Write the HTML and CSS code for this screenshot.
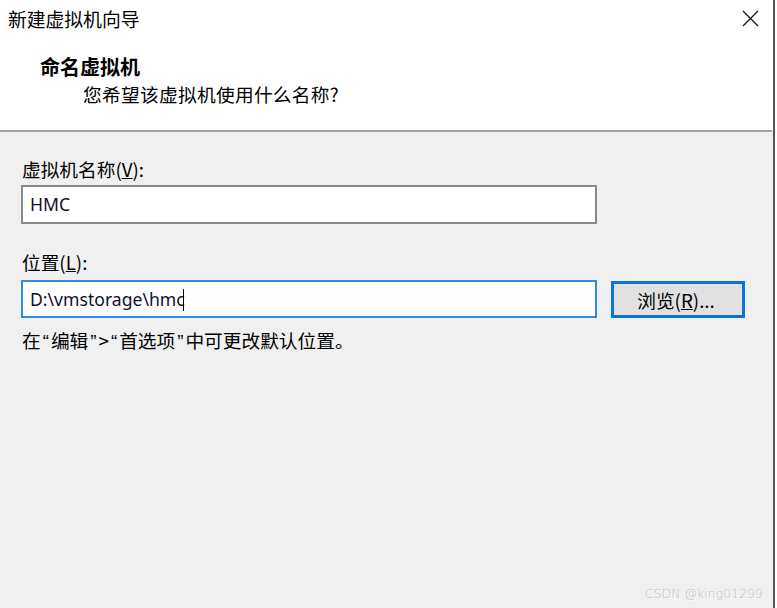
FILE: index.html
```html
<!DOCTYPE html>
<html lang="zh-CN">
<head>
<meta charset="utf-8">
<title>新建虚拟机向导</title>
<link rel="stylesheet" href="styles.css">
</head>
<body>
<div class="window">
  <div class="header">
    <div class="titlebar">
      <span class="title">新建虚拟机向导</span>
      <svg class="close" width="17" height="17" viewBox="0 0 17 17"><path d="M1 1 L16 16 M16 1 L1 16" stroke="#1a1a1a" stroke-width="1.4" fill="none"/></svg>
    </div>
    <div class="heading">命名虚拟机</div>
    <div class="subtitle">您希望该虚拟机使用什么名称?</div>
  </div>
  <div class="sep"></div>
  <div class="content">
    <div class="label label-first">虚拟机名称(<u>V</u>):</div>
    <div class="field">HMC</div>
    <div class="label label-second">位置(<u>L</u>):</div>
    <div class="row">
      <div class="field field-focus">D:\vmstorage\hmc<span class="caret"></span></div>
      <div class="btn">浏览(<u>R</u>)...</div>
    </div>
    <div class="note">在<span class="q">“</span>编辑<span class="q">”</span>&gt;<span class="q">“</span>首选项<span class="q">”</span>中可更改默认位置。</div>
  </div>
  <div class="watermark">CSDN @king01299</div>
</div>
</body>
</html>
```
FILE: styles.css
```css
html, body {
  margin: 0;
  padding: 0;
  background: #ffffff;
}
body {
  font-family: "Noto Sans CJK SC", "Noto Sans", sans-serif;
  color: #000;
  font-size: 18.7px;
}
.window {
  position: relative;
  width: 775px;
  height: 608px;
  box-sizing: border-box;
  border-right: 2px solid #555555;
  display: flex;
  flex-direction: column;
  overflow: hidden;
}
.header {
  height: 130px;
  background: #ffffff;
  flex: none;
}
.titlebar {
  height: 38px;
  display: flex;
  align-items: center;
  justify-content: space-between;
  padding: 0 14px 0 8px;
}
.title {
  line-height: 38px;
  font-size: 18.8px;
}
.close {
  display: block;
  margin-top: -2px;
}
.heading {
  margin-top: 17px;
  padding-left: 40px;
  line-height: 24px;
  font-size: 20px;
  font-weight: bold;
}
.subtitle {
  margin-top: 3px;
  padding-left: 83px;
  line-height: 24px;
  letter-spacing: 0.3px;
}
.sep {
  height: 2px;
  background: #a3a3a3;
  flex: none;
  margin-right: 1px;
}
.content {
  flex: 1;
  background: #f0f0f0;
  padding: 25px 0 0 21px;
  display: flex;
  flex-direction: column;
}
.label {
  line-height: 24px;
  padding-left: 1px;
}
.label-first {
  margin-bottom: 4px;
}
.label-second {
  margin-top: 26px;
  margin-bottom: 6px;
}
.field {
  width: 576px;
  height: 39px;
  box-sizing: border-box;
  border: 2px solid #8a8a8a;
  background: #ffffff;
  padding-left: 7px;
  font-family: "Noto Sans", sans-serif;
  font-size: 17.6px;
  line-height: 35px;
  color: #101030;
  white-space: nowrap;
}
.row {
  display: flex;
  gap: 14px;
}
.field-focus {
  height: 38px;
  line-height: 34px;
  border-color: #2f8ae0;
}
.caret {
  display: inline-block;
  width: 1.5px;
  height: 22px;
  background: #000;
  vertical-align: middle;
  margin-left: -2px;
  margin-top: -3px;
}
.btn {
  width: 134px;
  height: 37px;
  box-sizing: border-box;
  border: 3px solid #0a74d8;
  background: #e1e1e1;
  text-align: center;
  line-height: 31px;
  margin-top: 1px;
  padding-right: 4px;
}
.note {
  margin-top: 10px;
  line-height: 24px;
  padding-left: 1px;
}
.q {
  font-family: "Liberation Sans", sans-serif;
  padding: 0 2px;
}
.watermark {
  position: absolute;
  left: 645px;
  top: 584px;
  line-height: 20px;
  font-family: "DejaVu Sans", sans-serif;
  font-size: 12.5px;
  font-weight: 300;
  color: #c0c0c0;
  text-shadow: 1px 1px 0 #ffffff;
}
```
